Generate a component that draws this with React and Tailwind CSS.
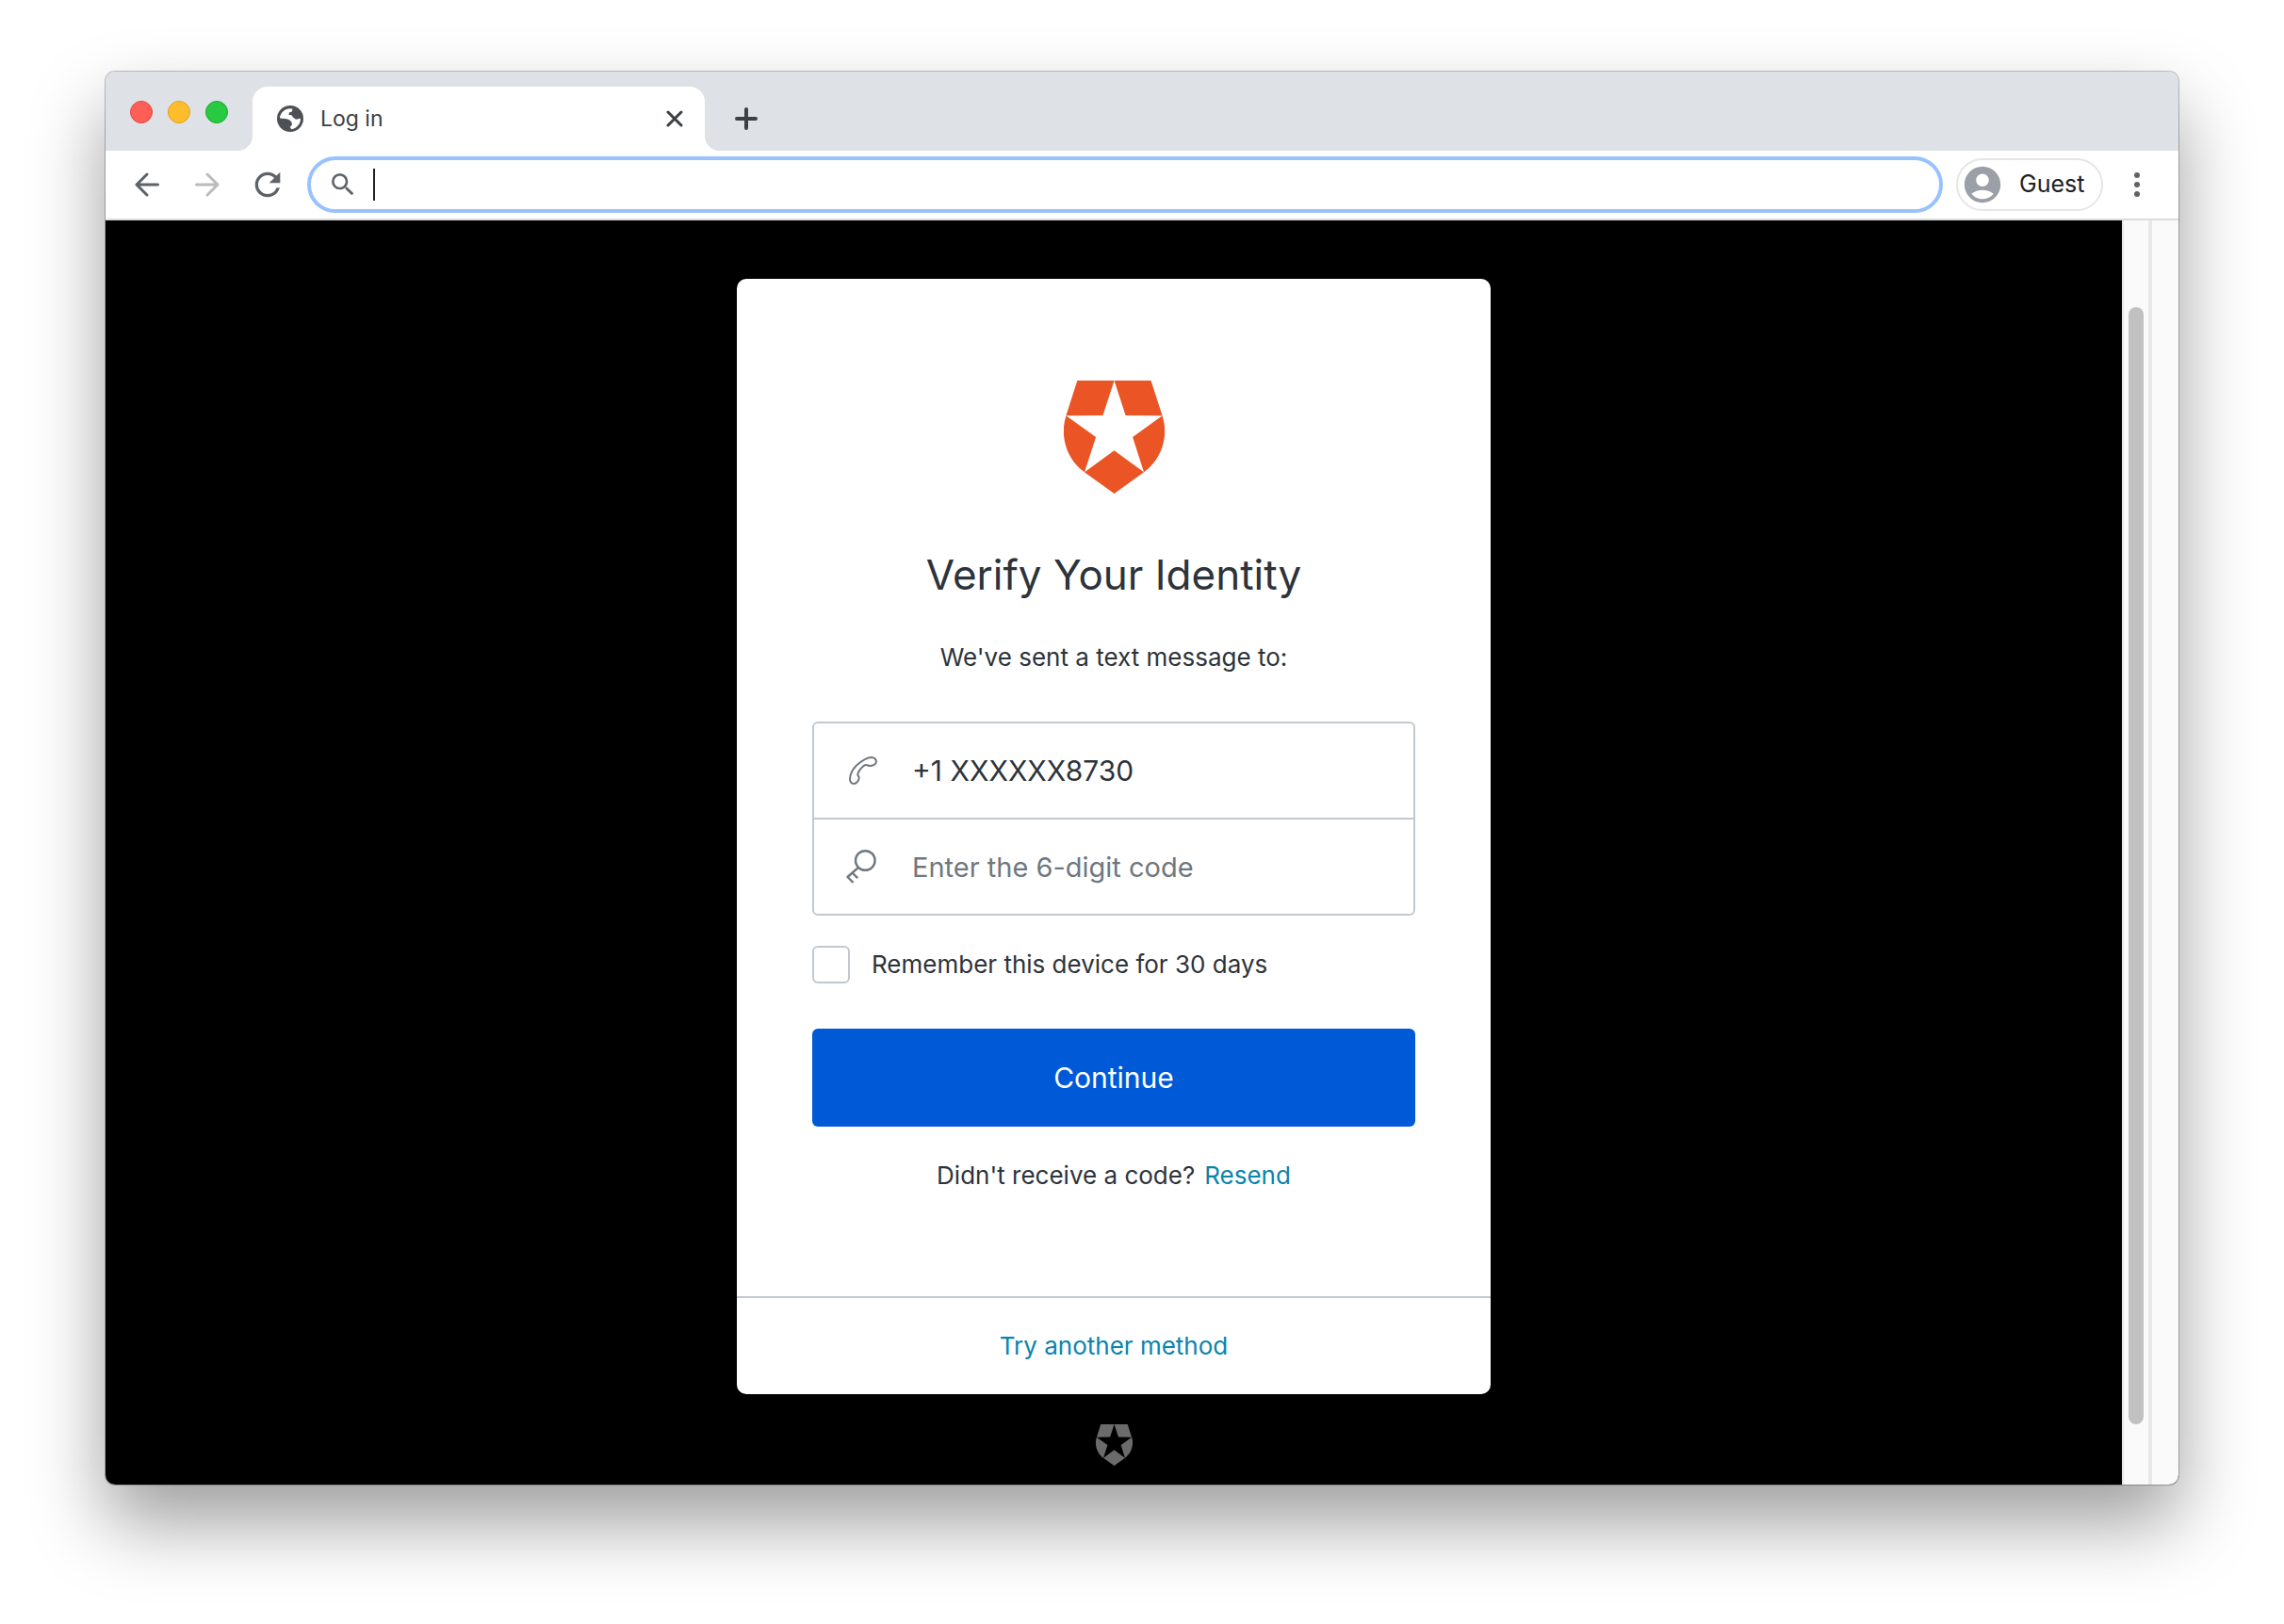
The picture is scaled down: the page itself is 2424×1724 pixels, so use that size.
import { MdAccountCircle, MdRefresh, MdSearch } from "react-icons/md";

function ShieldLogo({ className }) {
  return (
    <svg viewBox="1.55 0 20.9 24" preserveAspectRatio="none" fill="currentColor" className={className} aria-hidden="true">
      <path d="M21.98 7.448L19.62 0H4.347L2.02 7.448c-1.352 4.312.03 9.206 3.815 12.015L12.007 24l6.157-4.552c3.755-2.81 5.182-7.688 3.815-12.015l-6.16 4.58 2.343 7.45-6.157-4.597-6.158 4.58 2.358-7.433-6.188-4.55 7.63-.045L12.008 0l2.356 7.404 7.615.044z" />
    </svg>
  );
}

function GlobeIcon() {
  return (
    <svg viewBox="0 0 28 28" className="size-7" aria-hidden="true">
      <circle cx="14" cy="14" r="14" fill="#4d5156" />
      <path
        d="M3 13.500C3 8.500 7.500 3.700 13 3.200L16.500 3.400 15.800 6.500 12.800 7.500 12.500 10 15.500 10.200 17 12.500 20 14.800 25 13.800C25.200 19.500 20.800 24.600 15.200 25.200L13.800 22.800 16 20.500 15.500 17.800 13.500 15.500 10.500 14.300Z"
        fill="white"
      />
    </svg>
  );
}

function PhoneIcon() {
  return (
    <svg viewBox="0 0 30 30" fill="none" stroke="currentColor" strokeWidth="2" strokeLinejoin="round" className="size-[30px]" aria-hidden="true">
      <path d="M29 5.600C29 3 26.500 1 24 1 18.500 1 12 6 8 9.500 3.500 14 1 20 1 24.500c0 2.200 1.800 4.500 4 4.500 3.200 0 5.700-3.600 5.700-6.500 0-1.200-1.400-1.700-1.400-3.200 0-3 5.600-10.200 9-10.200 1.200 0 2.400.9 4 .9 3 0 6.700-1.800 6.700-4.400z" />
    </svg>
  );
}

function KeyIcon() {
  return (
    <svg viewBox="0 0 32 36" fill="none" stroke="currentColor" strokeWidth="2.400" className="h-9 w-8" aria-hidden="true">
      <circle cx="20.300" cy="11.500" r="10.300" />
      <path d="M13 18.800 1.500 29M.8 28.200 7.500 35M6.500 24.500l5.700 5.700" />
    </svg>
  );
}

function TabStrip() {
  return (
    <div className="flex h-[84px] items-center bg-[#dee1e6] pl-[26px]">
      <div className="flex gap-4 pt-[2px]">
        <button aria-label="Close window" className="size-6 rounded-full border border-[#e2463f] bg-[#ff5f57]" />
        <button aria-label="Minimize window" className="size-6 rounded-full border border-[#e1a116] bg-[#ffbd2e]" />
        <button aria-label="Zoom window" className="size-6 rounded-full border border-[#12ac28] bg-[#28ca41]" />
      </div>
      <span className="ml-[10px] size-4 self-end bg-[radial-gradient(circle_at_0_0,transparent_16px,white_16px)]" />
      <div className="flex h-[68px] w-[480px] items-center self-end rounded-t-2xl bg-white pr-4 pl-[26px]">
        <GlobeIcon />
        <span className="ml-[18px] flex-1 text-[23px] text-[#3c4043]">Log in</span>
        <button aria-label="Close tab" className="grid size-8 place-items-center text-[#3c4043]">
          <svg viewBox="0 0 18 18" fill="none" stroke="currentColor" strokeWidth="3" strokeLinecap="round" className="size-[18px]">
            <path d="M2 2 16 16M16 2 2 16" />
          </svg>
        </button>
      </div>
      <span className="size-4 self-end bg-[radial-gradient(circle_at_100%_0,transparent_16px,white_16px)]" />
      <button aria-label="New tab" className="grid h-[68px] w-14 place-items-center self-end text-[#3c4043]">
        <svg viewBox="0 0 24 24" fill="none" stroke="currentColor" strokeWidth="4" strokeLinecap="round" className="size-6">
          <path d="M12 2v20M2 12h20" />
        </svg>
      </button>
    </div>
  );
}

function Toolbar() {
  return (
    <div className="flex h-[74px] items-center border-b-2 border-[#dadce0] bg-white pr-2 pl-3">
      <button aria-label="Back" className="grid h-14 w-16 place-items-center text-[#5f6368]">
        <svg viewBox="0 0 26 26" fill="none" stroke="currentColor" strokeWidth="3" strokeLinecap="round" strokeLinejoin="round" className="size-[26px]">
          <path d="M24.500 13H2M13 2 2 13l11 11" />
        </svg>
      </button>
      <button aria-label="Forward" className="grid h-14 w-16 place-items-center text-[#babcbe]">
        <svg viewBox="0 0 26 26" fill="none" stroke="currentColor" strokeWidth="3" strokeLinecap="round" strokeLinejoin="round" className="size-[26px]">
          <path d="M1.500 13H24M13 2l11 11-11 11" />
        </svg>
      </button>
      <button aria-label="Reload" className="grid h-14 w-16 place-items-center text-[#5f6368]">
        <MdRefresh className="size-10" />
      </button>
      <div className="ml-[10px] flex h-[60px] flex-1 items-center rounded-full border-4 border-[#99c2fd] bg-white pr-6 pl-[18px]">
        <MdSearch className="size-8 text-[#5f6368]" />
        <span className="ml-4 h-[34px] w-[2px] bg-[#202124]" />
        <input aria-label="Address and search bar" className="h-10 min-w-0 flex-1 text-[26px] outline-none" />
      </div>
      <button className="ml-[14px] flex h-14 w-[156px] items-center rounded-full border-2 border-[#e6e6e7] bg-white pl-[3px] text-[25px] text-[#202124]">
        <MdAccountCircle className="size-[46px] text-[#9aa0a6]" />
        <span className="ml-4">Guest</span>
      </button>
      <button aria-label="Menu" className="flex h-14 w-[72px] flex-col items-center justify-center gap-1">
        <span className="size-[6px] rounded-full bg-[#5f6368]" />
        <span className="size-[6px] rounded-full bg-[#5f6368]" />
        <span className="size-[6px] rounded-full bg-[#5f6368]" />
      </button>
    </div>
  );
}

function VerifyCard() {
  return (
    <section className="w-full max-w-[800px] rounded-[10px] bg-white text-[26px] leading-10 text-[#2d333a]">
      <form className="flex flex-col px-20 pt-[108px] pb-[108px]" onSubmit={(e) => e.preventDefault()}>
        <ShieldLogo className="h-[120px] w-[107px] self-center text-[#eb5424]" />
        <h1 className="mt-[58px] text-center text-[44px] leading-14">Verify Your Identity</h1>
        <p className="mt-10 text-center">We've sent a text message to:</p>
        <div className="mt-12 divide-y-2 divide-[#c2c8d0] rounded-[6px] border-2 border-[#c2c8d0] text-[#6f7780]">
          <label className="flex h-[102px] items-center">
            <span className="ml-[37px] flex w-[67px]">
              <PhoneIcon />
            </span>
            <input aria-label="Phone number" readOnly defaultValue="+1 XXXXXX8730" className="h-20 min-w-0 flex-1 text-[30px] text-[#2d333a] outline-none" />
          </label>
          <label className="flex h-[100px] items-center">
            <span className="ml-[34px] flex w-[70px]">
              <KeyIcon />
            </span>
            <input aria-label="Code" placeholder="Enter the 6-digit code" className="h-20 min-w-0 flex-1 text-[30px] text-[#2d333a] outline-none placeholder:text-[29px] placeholder:text-[#6f7780]" />
          </label>
        </div>
        <label className="mt-8 flex h-10 items-center gap-[23px]">
          <input type="checkbox" className="size-10 appearance-none rounded-[6px] border-2 border-[#c2c8d0] bg-white" />
          Remember this device for 30 days
        </label>
        <button type="submit" className="mt-12 h-[104px] rounded-[6px] bg-[#0059d6] text-[30px] text-white">
          Continue
        </button>
        <p className="mt-8 flex justify-center gap-[10px]">
          Didn't receive a code? <a href="#resend" className="text-[#0a84ae]">Resend</a>
        </p>
      </form>
      <div className="flex h-[104px] items-center justify-center border-t-2 border-[#c2c8d0]">
        <a href="#methods" className="text-[#0a84ae]">Try another method</a>
      </div>
    </section>
  );
}

export default function App() {
  return (
    <div className="flex min-h-screen flex-col bg-white px-28 pt-[76px] pb-[148px] font-['Inter',sans-serif]">
      <div className="flex flex-1 flex-col overflow-hidden rounded-[10px] bg-white shadow-[0_0_0_1px_rgba(0,0,0,0.25),0_40px_80px_rgba(0,0,0,0.39)]">
        <TabStrip />
        <Toolbar />
        <div className="flex flex-1 bg-black">
          <main className="flex flex-1 flex-col items-center pt-[62px]">
            <VerifyCard />
            <ShieldLogo className="mt-8 h-11 w-[39px] text-[#6b6b6b]" />
          </main>
          <div className="flex w-8 justify-center border-r-4 border-l-2 border-[#e8e8e8] bg-[#fafafa] pt-[92px] pb-16">
            <span className="w-4 rounded-full bg-[#c1c1c1]" />
          </div>
          <div className="w-7 bg-[#fafafa]" />
        </div>
      </div>
    </div>
  );
}
